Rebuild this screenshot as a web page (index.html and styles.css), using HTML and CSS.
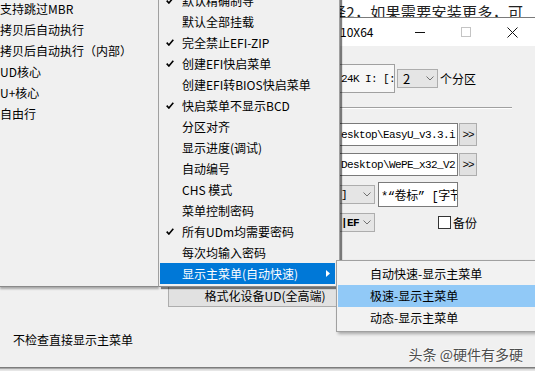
FILE: index.html
```html
<!DOCTYPE html>
<html lang="zh-CN">
<head>
  <meta charset="UTF-8" />
  <meta name="viewport" content="width=device-width, initial-scale=1.0" />
  <title>EasyU - 菜单设置</title>
  <link rel="stylesheet" href="styles.css">
</head>
<body>
  <div class="page-strip">择2，如果需要安装更多，可</div>

  <div class="dialog">
    <div class="titlebar">
      <span class="title">10X64</span>
      <div class="caption-btns">
        <span class="cap-btn">
          <svg width="10" height="10" viewBox="0 0 10 10"><path d="M0 5.5h10" stroke="#111" stroke-width="1"/></svg>
        </span>
        <span class="cap-btn">
          <svg width="10" height="10" viewBox="0 0 10 10"><rect x="0.5" y="0.5" width="9" height="9" fill="none" stroke="#c4c4c4" stroke-width="1"/></svg>
        </span>
        <span class="cap-btn">
          <svg width="11" height="11" viewBox="0 0 11 11"><path d="M0.5 0.5l10 10M10.5 0.5l-10 10" stroke="#111" stroke-width="1"/></svg>
        </span>
      </div>
    </div>

    <div class="client">
      <div class="right-col">
        <div class="row row-part">
          <div class="part-box">24K I: [:</div>
          <div class="combo combo-num">
            <span>2</span>
            <svg class="chev" width="8" height="5" viewBox="0 0 8 5"><path d="M0.5 0.5l3.5 3.5 3.5-3.5" fill="none" stroke="#707070"/></svg>
          </div>
          <span class="lbl">个分区</span>
        </div>

        <div class="sep"></div>

        <div class="row row-path">
          <div class="edit">esktop\EasyU_v3.3.i</div>
          <div class="browse">&gt;&gt;</div>
        </div>
        <div class="row row-path second">
          <div class="edit">Desktop\WePE_x32_V2</div>
          <div class="browse">&gt;&gt;</div>
        </div>

        <div class="row row-label">
          <div class="combo combo-small">
            <span class="mono">]</span>
            <svg class="chev" width="8" height="5" viewBox="0 0 8 5"><path d="M0.5 0.5l3.5 3.5 3.5-3.5" fill="none" stroke="#707070"/></svg>
          </div>
          <div class="edit edit-label">*“卷标” [字节]</div>
        </div>

        <div class="row row-boot">
          <div class="combo combo-small">
            <span class="mono bold">|EF</span>
            <svg class="chev" width="8" height="5" viewBox="0 0 8 5"><path d="M0.5 0.5l3.5 3.5 3.5-3.5" fill="none" stroke="#707070"/></svg>
          </div>
          <label class="check">
            <span class="box"></span>
            <span>备份</span>
          </label>
        </div>
      </div>

      <div class="format-row">
        <button class="btn-format">格式化设备UD(全高端)</button>
      </div>

      <div class="hint">不检查直接显示主菜单</div>
    </div>
  </div>

  <!-- parent menu (partly off screen) -->
  <div class="menu menu-1">
    <div class="item">支持跳过MBR</div>
    <div class="item">拷贝后自动执行</div>
    <div class="item">拷贝后自动执行（内部）</div>
    <div class="item">UD核心</div>
    <div class="item">U+核心</div>
    <div class="item">自由行</div>
  </div>

  <div class="menu menu-2">
    <div class="item"><span class="chk"><svg width="8" height="7" viewBox="0 0 8 7"><path d="M0.7 3.6l2.2 2.4 4.4-5.3" fill="none" stroke="#000" stroke-width="1.6"/></svg></span>默认精确制导</div>
    <div class="item"><span class="chk"></span>默认全部挂载</div>
    <div class="item"><span class="chk"><svg width="8" height="7" viewBox="0 0 8 7"><path d="M0.7 3.6l2.2 2.4 4.4-5.3" fill="none" stroke="#000" stroke-width="1.6"/></svg></span>完全禁止EFI-ZIP</div>
    <div class="item"><span class="chk"><svg width="8" height="7" viewBox="0 0 8 7"><path d="M0.7 3.6l2.2 2.4 4.4-5.3" fill="none" stroke="#000" stroke-width="1.6"/></svg></span>创建EFI快启菜单</div>
    <div class="item"><span class="chk"></span>创建EFI转BIOS快启菜单</div>
    <div class="item"><span class="chk"><svg width="8" height="7" viewBox="0 0 8 7"><path d="M0.7 3.6l2.2 2.4 4.4-5.3" fill="none" stroke="#000" stroke-width="1.6"/></svg></span>快启菜单不显示BCD</div>
    <div class="item"><span class="chk"></span>分区对齐</div>
    <div class="item"><span class="chk"></span>显示进度(调试)</div>
    <div class="item"><span class="chk"></span>自动编号</div>
    <div class="item"><span class="chk"></span>CHS 模式</div>
    <div class="item"><span class="chk"></span>菜单控制密码</div>
    <div class="item"><span class="chk"><svg width="8" height="7" viewBox="0 0 8 7"><path d="M0.7 3.6l2.2 2.4 4.4-5.3" fill="none" stroke="#000" stroke-width="1.6"/></svg></span>所有UDm均需要密码</div>
    <div class="item"><span class="chk"></span>每次均输入密码</div>
    <div class="item active"><span class="chk"></span>显示主菜单(自动快速)
      <svg class="arrow" width="4" height="7" viewBox="0 0 4 7"><path d="M0 0l4 3.5L0 7z" fill="#fff"/></svg>
    </div>
  </div>

  <div class="menu menu-3">
    <div class="item">自动快速-显示主菜单</div>
    <div class="item hover">极速-显示主菜单</div>
    <div class="item">动态-显示主菜单</div>
  </div>

  <div class="watermark">头条 @硬件有多硬</div>
</body>
</html>
```

FILE: styles.css
```css
body {
  margin: 0;
  width: 535px;
  height: 371px;
  overflow: hidden;
  position: relative;
  background: #e6e6e6;
  color: #000;
  font-family: 'Noto Sans CJK SC', 'Noto Sans', sans-serif;
  font-size: 12px;
}

/* web page behind the dialog */
.page-strip {
  height: 17px;
  box-sizing: border-box;
  padding: 3px 0 0 331px;
  background: #fff;
  font-size: 15px;
  line-height: 17px;
  letter-spacing: 0.3px;
  color: #222;
  white-space: nowrap;
  overflow: hidden;
}

.dialog {
  border-top: 1px solid #7a7a7a;
  border-bottom: 1px solid #7d7d7d;
  box-shadow: 0 1px 1px #a8a8a8;
}

.titlebar {
  display: flex;
  align-items: center;
  height: 28px;
  background: #fff;
}

.title {
  margin-left: 340px;
  line-height: 16px;
}

.caption-btns {
  display: flex;
  margin-left: auto;
}

.cap-btn {
  width: 46px;
  height: 28px;
  display: flex;
  align-items: center;
  justify-content: center;
}

.client {
  height: 321px;
  box-sizing: border-box;
  padding-top: 18px;
  background: #f0f0f0;
}

.right-col {
  margin-left: 336px;
}

.row {
  display: flex;
  align-items: center;
}

.mono {
  font-family: 'Liberation Mono', 'Noto Sans CJK SC', monospace;
  font-size: 11px;
  letter-spacing: -0.6px;
}

.bold {
  font-weight: bold;
}

.row-part {
  height: 29px;
}

.part-box {
  width: 59px;
  height: 29px;
  box-sizing: border-box;
  border: 1px solid #a0a0a0;
  background: #f7f7f7;
  padding-left: 4px;
  display: flex;
  align-items: center;
  font-family: 'Liberation Mono', monospace;
  font-size: 11px;
  letter-spacing: -0.6px;
  white-space: nowrap;
  overflow: hidden;
}

.combo {
  height: 19px;
  box-sizing: border-box;
  border: 1px solid #adadad;
  background: #e5e5e5;
  display: flex;
  align-items: center;
  padding: 0 3px 0 4px;
  line-height: 16px;
}

.combo .chev {
  margin-left: auto;
}

.combo-num {
  width: 41px;
  margin-left: 2px;
  padding-left: 5px;
  font-size: 13px;
}

.combo-small {
  width: 39px;
  padding-left: 4px;
}

.lbl {
  margin-left: 2px;
  line-height: 16px;
}

.sep {
  width: 176px;
  height: 1px;
  margin-top: 14px;
  background: #a0a0a0;
  border-bottom: 1px solid #fff;
}

.row-path {
  height: 23px;
  margin-top: 14px;
}

.row-path.second {
  margin-top: 7px;
}

.edit {
  width: 122px;
  height: 100%;
  box-sizing: border-box;
  border: 1px solid #7a7a7a;
  background: #fff;
  padding-left: 4px;
  display: flex;
  align-items: center;
  font-family: 'Liberation Mono', 'Noto Sans CJK SC', monospace;
  font-size: 11px;
  letter-spacing: -0.6px;
  white-space: nowrap;
  overflow: hidden;
}

.browse {
  width: 18px;
  height: 100%;
  margin-left: 1px;
  box-sizing: border-box;
  border: 1px solid #adadad;
  background: #e1e1e1;
  display: flex;
  align-items: center;
  justify-content: center;
  font-family: 'Liberation Mono', monospace;
  font-size: 11px;
  letter-spacing: -1px;
}

.row-label {
  height: 25px;
  margin-top: 6px;
}

.edit-label {
  width: 80px;
  margin-left: 3px;
  padding-left: 2px;
  font-size: 12px;
  letter-spacing: -0.4px;
}

.row-boot {
  height: 19px;
  margin-top: 6px;
}

.check {
  display: flex;
  align-items: center;
  margin-left: 63px;
  line-height: 16px;
}

.check .box {
  width: 13px;
  height: 13px;
  box-sizing: border-box;
  border: 1px solid #333;
  background: #fff;
  margin-right: 2px;
}

.format-row {
  margin: 53px 0 0 168px;
}

.btn-format {
  width: 194px;
  height: 22px;
  border: 1px solid #adadad;
  background: #e1e1e1;
  font-family: 'Noto Sans CJK SC', sans-serif;
  font-size: 12px;
  line-height: 18px;
  padding: 0;
  color: #000;
}

.hint {
  margin: 25px 0 0 13px;
  line-height: 16px;
}

/* popup menus */
.menu {
  position: absolute;
  box-sizing: border-box;
  white-space: nowrap;
}

.menu .item {
  height: 21px;
  line-height: 21px;
  display: flex;
  align-items: center;
}

.menu-1 {
  left: 0;
  top: -2px;
  width: 159px;
  height: 289px;
  background: #f0f0f0;
  border-right: 1px solid #a0a0a0;
  border-bottom: 1px solid #8a8a8a;
  box-shadow: 0 2px 2px rgba(0, 0, 0, 0.3);
  overflow: hidden;
}

.menu-2 {
  left: 159px;
  top: -10px;
  width: 181px;
  height: 297px;
  padding-bottom: 2px;
  background: #f0f0f0;
  border-right: 1px solid #a0a0a0;
  border-bottom: 1px solid #8a8a8a;
  box-shadow: 2px 2px 1px rgba(0, 0, 0, 0.5);
}

.menu-2 .item {
  margin: 0 4px 0 1px;
}

.menu-2 .chk {
  width: 22px;
  height: 21px;
  box-sizing: border-box;
  padding-left: 6px;
  display: flex;
  align-items: center;
}

.menu-2 .item.active {
  background: #0078d7;
  color: #fff;
}

.menu-2 .arrow {
  margin: 0 5px 0 auto;
}

.menu-3 {
  left: 336px;
  top: 260px;
  width: 220px;
  height: 72px;
  padding-top: 2px;
  background: #f2f2f2;
  border: 1px solid #a0a0a0;
  box-shadow: 2px 2px 3px rgba(0, 0, 0, 0.3);
}

.menu-3 .item {
  height: 22px;
  line-height: 22px;
  margin-left: 1px;
  padding-left: 32px;
}

.menu-3 .item.hover {
  background: #91c9f7;
}

.watermark {
  position: absolute;
  right: 12px;
  bottom: 8px;
  font-size: 14px;
  line-height: 18px;
  color: #4d4d4d;
  text-shadow: 0 0 2px #fff, 0 0 2px #fff;
}
```
